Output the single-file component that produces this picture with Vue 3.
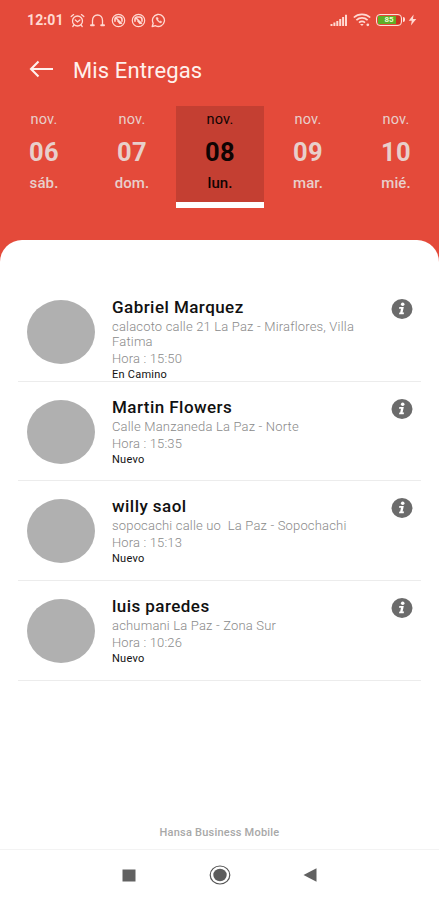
<template>
  <div class="screen">
    <header class="header">
      <div class="status-bar">
        <span class="clock">12:01</span>
        <div class="status-icons">
          <svg width="15" height="15" viewBox="0 0 15 15" fill="none" stroke="currentColor" stroke-width="1.3" stroke-linecap="round">
            <circle cx="7.5" cy="8" r="5" />
            <path d="M1.2 3.6 3.6 1.6M13.8 3.6 11.4 1.6M5.3 7l2.2 2 2.4-2M3.8 12.2l-1 1.3M11.2 12.2l1 1.3" />
          </svg>
          <svg width="15" height="15" viewBox="0 0 15 15" fill="none" stroke="currentColor" stroke-width="1.3" stroke-linecap="round">
            <path d="M2.5 12.4V7.5C2.5 4.2 4.600 2 7.5 2s5 2.200 5 5.500v4.900" />
            <path d="M1 12.3h2.800M11.2 12.3H14" stroke-width="2" />
          </svg>
          <svg v-for="n in 2" :key="n" width="15" height="15" viewBox="0 0 15 15" fill="none" stroke="currentColor" stroke-width="1.2">
            <circle cx="7.5" cy="7.5" r="6.2" />
            <path d="M4 8.8V6.2C4 4.8 5 4 6.3 4h2.2c1.4 0 2.5 1 2.5 2.4v2.4M4.5 4.5l6.4 6.2M6.3 7.3l3 3.5" stroke-width="1.6" />
          </svg>
          <svg width="15" height="15" viewBox="0 0 15 15" fill="none" stroke="currentColor" stroke-width="1.3">
            <path d="M1.2 13.5l1-3.2A6 6 0 1 1 4.6 12.7z" stroke-linejoin="round" />
            <path d="M5.2 4.5c-.8 1.500 2.500 5.700 4.900 5.400l.8-1.200-1.500-.8-.8.600-1.800-1.800.6-.8-.7-1.500z" fill="currentColor" stroke-width=".4" />
          </svg>
        </div>
        <div class="status-right">
          <svg width="18" height="13" viewBox="0 0 18 13" fill="currentColor">
            <path d="M.5 10h2v2h-2zM3.4 8.5h2V12h-2zM6.3 7h2v5h-2zM9.2 5h2v7h-2zM12.1 3h2v9h-2zM15 .8h2V12h-2z" />
          </svg>
          <svg width="18" height="14" viewBox="0 0 18 14" fill="none" stroke="currentColor" stroke-width="1.7">
            <path d="M.8 4.5c4.6-4.3 11.8-4.3 16.4 0M3.4 7.1c3.2-2.9 8-2.9 11.2 0M6 9.6c1.8-1.5 4.2-1.5 6 0" />
            <path d="M7 11l2 2 1.7-2z" fill="currentColor" stroke="none" />
            <circle cx="14.8" cy="11.8" r="1.4" fill="currentColor" stroke="none" />
          </svg>
          <span class="battery">
            <span class="battery-level">85</span>
          </span>
          <svg width="9" height="12" viewBox="0 0 9 12" fill="currentColor">
            <path d="M5.6.5.7 6.7h3.1L2.9 11.5 8.3 5H5z" />
          </svg>
        </div>
      </div>

      <div class="title-bar">
        <button class="back-button" aria-label="Volver">
          <svg width="25" height="18" viewBox="0 0 25 18" fill="none" stroke="currentColor" stroke-width="2.1">
            <path d="M24 9H2.500M9.5 1.5 2 9l7.5 7.5" />
          </svg>
        </button>
        <h1>Mis Entregas</h1>
      </div>

      <div class="days">
        <div
          v-for="day in days"
          :key="day.number"
          class="day"
          :class="{ active: day.number === selectedDay }"
          @click="selectedDay = day.number"
        >
          <span class="day-month">nov.</span>
          <span class="day-number">{{ day.number }}</span>
          <span class="day-name">{{ day.name }}</span>
        </div>
      </div>
    </header>

    <main class="sheet">
      <ul class="deliveries">
        <li v-for="item in deliveries" :key="item.name" class="delivery">
          <div class="avatar"></div>
          <div class="delivery-info">
            <h2>{{ item.name }}</h2>
            <p class="address">{{ item.address }}</p>
            <p class="hour">Hora : {{ item.hour }}</p>
            <p class="state">{{ item.state }}</p>
          </div>
          <button class="info-button" aria-label="Información">
            <svg width="22" height="20" viewBox="0 0 22 20" preserveAspectRatio="none">
              <ellipse cx="11" cy="10" rx="10.5" ry="9.9" fill="#6b6b6b" />
              <circle cx="11.7" cy="5.2" r="1.8" fill="#fff" />
              <path d="M8.3 8h4.5l-1.2 5.5h1.5l-.4 1.8H8l.4-1.8h.8l.8-3.7H8z" fill="#fff" />
            </svg>
          </button>
        </li>
      </ul>
      <footer class="brand">Hansa Business Mobile</footer>
    </main>

    <nav class="nav-bar">
      <svg width="14" height="13" viewBox="0 0 14 13"><path d="M.5.5h13v12H.5z" fill="#616161" /></svg>
      <svg width="22" height="20" viewBox="0 0 22 20" preserveAspectRatio="none">
        <ellipse cx="11" cy="10" rx="9.8" ry="9" fill="none" stroke="#555" stroke-width="1.2" />
        <ellipse cx="11" cy="10" rx="6.7" ry="6.2" fill="#5c5c5c" />
      </svg>
      <svg width="14" height="14" viewBox="0 0 14 14"><path d="M13.5.3v13.4L.5 7z" fill="#616161" /></svg>
    </nav>
  </div>
</template>

<script setup>
import { ref } from 'vue';

const selectedDay = ref('08');

const days = [
  { number: '06', name: 'sáb.' },
  { number: '07', name: 'dom.' },
  { number: '08', name: 'lun.' },
  { number: '09', name: 'mar.' },
  { number: '10', name: 'mié.' },
];

const deliveries = ref([
  { name: 'Gabriel Marquez', address: 'calacoto calle 21 La Paz - Miraflores, Villa Fatima', hour: '15:50', state: 'En Camino' },
  { name: 'Martin Flowers', address: 'Calle Manzaneda La Paz - Norte', hour: '15:35', state: 'Nuevo' },
  { name: 'willy saol', address: 'sopocachi calle uo  La Paz - Sopochachi', hour: '15:13', state: 'Nuevo' },
  { name: 'luis paredes', address: 'achumani La Paz - Zona Sur', hour: '10:26', state: 'Nuevo' },
]);
</script>

<style>
body {
  margin: 0;
  background: #fff;
}
</style>

<style scoped>
.screen {
  width: 439px;
  height: 900px;
  display: flex;
  flex-direction: column;
  overflow: hidden;
  background: #fff;
  font-family: Roboto, sans-serif;
}
.header {
  flex: none;
  height: 262px;
  background: #e44a3a;
  color: #ffd9d2;
}
.status-bar {
  height: 40px;
  padding: 0 22px 0 27px;
  display: flex;
  align-items: center;
  box-sizing: border-box;
}
.clock {
  width: 43px;
  font-size: 14px;
  font-weight: 700;
  letter-spacing: 0.1px;
}
.status-icons {
  display: flex;
  gap: 5.3px;
}
.status-right {
  margin-left: auto;
  display: flex;
  align-items: center;
  gap: 5px;
}
.battery {
  position: relative;
  width: 26px;
  height: 12px;
  padding: 1px;
  box-sizing: border-box;
  border: 1.5px solid #ffe0da;
  border-radius: 4px;
  display: flex;
}
.battery::after {
  content: '';
  position: absolute;
  right: -4px;
  top: 2px;
  width: 2px;
  height: 5px;
  border-radius: 0 2px 2px 0;
  background: #ffe0da;
}
.battery-level {
  flex: 1;
  background: linear-gradient(to right, #5fae26 82%, #c8321f 82%);
  color: #e6ffd0;
  font-size: 8px;
  line-height: 8px;
  font-weight: 700;
  text-align: center;
}
.battery + svg {
  margin-left: 1px;
}
.title-bar {
  height: 60px;
  padding-left: 29px;
  display: flex;
  align-items: center;
}
.back-button {
  margin-top: -2px;
  padding: 0;
  border: none;
  background: none;
  color: #fff1ed;
  display: flex;
  cursor: pointer;
}
.title-bar h1 {
  margin: 0 0 0 19px;
  font-size: 22px;
  font-weight: 400;
  letter-spacing: 0.12px;
  color: #fff1ed;
}
.days {
  display: grid;
  grid-template-columns: repeat(5, 88px);
  margin-top: 6px;
}
.day {
  height: 102px;
  padding-top: 4px;
  box-sizing: border-box;
  display: flex;
  flex-direction: column;
  align-items: center;
  color: #e8cfcb;
  cursor: pointer;
}
.day.active {
  background: #c43f32;
  border-bottom: 6px solid #fff;
  color: #100403;
}
.day-month {
  font-size: 14.5px;
  line-height: 20px;
  letter-spacing: 0.15px;
}
.day-number {
  font-size: 25.5px;
  font-weight: 700;
  line-height: 44px;
  letter-spacing: 0.4px;
}
.day-name {
  font-size: 15px;
  font-weight: 500;
  line-height: 18px;
  letter-spacing: 0.1px;
}
.sheet {
  flex: 1;
  margin-top: -22px;
  padding: 42px 18px 0;
  display: flex;
  flex-direction: column;
  background: #fff;
  border-radius: 22px 22px 0 0;
}
.deliveries {
  margin: 0;
  padding: 0;
  list-style: none;
}
.delivery {
  height: 99.7px;
  padding: 14px 8px 0 9px;
  box-sizing: border-box;
  display: flex;
  align-items: flex-start;
  border-bottom: 1.5px solid #ececec;
}
.avatar {
  flex: none;
  width: 68px;
  height: 64px;
  margin-top: 4px;
  border-radius: 50%;
  background: #b0b0b0;
}
.delivery-info {
  width: 255px;
  margin-left: 17px;
}
.delivery-info h2 {
  margin: 0;
  font-size: 17px;
  font-weight: 500;
  line-height: 23px;
  letter-spacing: 0.45px;
  color: #111;
}
.delivery-info p {
  margin: 0;
}
.address {
  font-size: 13px;
  font-weight: 300;
  line-height: 15px;
  letter-spacing: 0.18px;
  color: #8a8a8a;
  white-space: pre-wrap;
}
.hour {
  font-size: 13px;
  font-weight: 300;
  line-height: 19px;
  letter-spacing: 0.15px;
  color: #8a8a8a;
}
.state {
  font-size: 11px;
  line-height: 13px;
  letter-spacing: 0.25px;
  color: #111;
}
.info-button {
  margin: 3px 0 0 auto;
  padding: 0;
  border: none;
  background: none;
  display: flex;
  cursor: pointer;
}
.brand {
  margin-top: auto;
  padding-bottom: 8px;
  text-align: center;
  font-size: 11px;
  font-weight: 500;
  line-height: 16px;
  letter-spacing: 0.22px;
  color: #a8a8a8;
}
.nav-bar {
  flex: none;
  height: 51px;
  padding: 0 122px;
  box-sizing: border-box;
  display: flex;
  align-items: center;
  justify-content: space-between;
  border-top: 1px solid #f3f3f3;
}
</style>
